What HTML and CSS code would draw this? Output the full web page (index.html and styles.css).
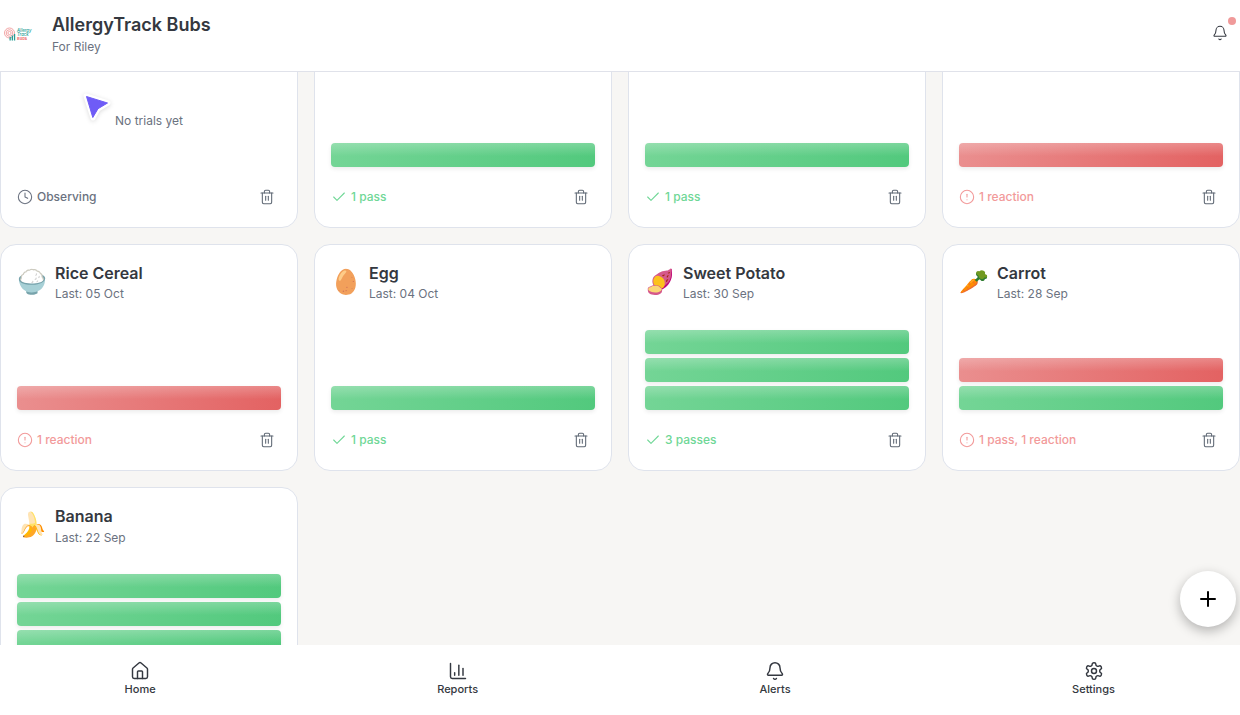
FILE: index.html
```html
<!DOCTYPE html>
<html lang="en">
<head>
<meta charset="utf-8">
<title>AllergyTrack Bubs</title>
<link rel="stylesheet" href="styles.css">
</head>
<body>
<svg class="sprite" aria-hidden="true">
  <symbol id="i-clock" viewBox="0 0 24 24"><circle cx="12" cy="12" r="10"/><polyline points="12 6 12 12 16 14"/></symbol>
  <symbol id="i-trash" viewBox="0 0 24 24"><path d="M3 6h18"/><path d="M19 6v14c0 1-1 2-2 2H7c-1 0-2-1-2-2V6"/><path d="M8 6V4c0-1 1-2 2-2h4c1 0 2 1 2 2v2"/><line x1="10" x2="10" y1="11" y2="17"/><line x1="14" x2="14" y1="11" y2="17"/></symbol>
  <symbol id="i-check" viewBox="0 0 24 24"><path d="M20 6 9 17l-5-5"/></symbol>
  <symbol id="i-alert" viewBox="0 0 24 24"><circle cx="12" cy="12" r="10"/><line x1="12" x2="12" y1="8" y2="12"/><line x1="12" x2="12.01" y1="16" y2="16"/></symbol>
  <symbol id="i-bell" viewBox="0 0 24 24"><path d="M10.268 21a2 2 0 0 0 3.464 0"/><path d="M3.262 15.326A1 1 0 0 0 4 17h16a1 1 0 0 0 .74-1.673C19.41 13.956 18 12.499 18 8A6 6 0 0 0 6 8c0 4.499-1.411 5.956-2.738 7.326"/></symbol>
</svg>
<div class="app">
  <header class="topbar">
    <div class="brand">
      <svg class="logo" viewBox="0 0 30 15" aria-hidden="true">
        <g fill="none" stroke="#ef8f8f" stroke-width=".8"><circle cx="5.5" cy="6" r="5"/><circle cx="5.5" cy="6" r="3.3"/><circle cx="5.5" cy="6" r="1.6"/></g>
        <g fill="#2a9d94"><rect x="5.5" y="10" width="1.3" height="3.5"/><rect x="7.7" y="8.5" width="1.3" height="5"/><rect x="9.9" y="7" width="1.3" height="6.5"/></g>
        <text x="13" y="4.5" class="logo-text">Allergy</text>
        <text x="13" y="8.7" class="logo-text">Track</text>
        <text x="13" y="13.4" class="logo-sub">Bubs</text>
      </svg>
      <div class="brand-text">
        <div class="app-name">AllergyTrack Bubs</div>
        <div class="app-sub">For Riley</div>
      </div>
    </div>
    <button class="bell"><svg class="icon i16"><use href="#i-bell"/></svg><span class="dot"></span></button>
  </header>

  <main class="content">
    <div class="grid">
      <article class="card">
        <div class="empty">No trials yet<svg class="pointer" viewBox="0 0 30 30" aria-hidden="true"><path class="pointer-halo" d="M4 3 26 10 16 16 11 25Z"/><path class="pointer-arrow" d="M4.5 3.5 25.5 10 16 15.7 10.8 24.5Z"/></svg></div>
        <div class="foot"><span class="status neutral"><svg class="icon i16"><use href="#i-clock"/></svg>Observing</span><button class="del"><svg class="icon i16"><use href="#i-trash"/></svg></button></div>
      </article>
      <article class="card">
        <div class="bars"><div class="bar pass"></div></div>
        <div class="foot"><span class="status good"><svg class="icon i16"><use href="#i-check"/></svg>1 pass</span><button class="del"><svg class="icon i16"><use href="#i-trash"/></svg></button></div>
      </article>
      <article class="card">
        <div class="bars"><div class="bar pass"></div></div>
        <div class="foot"><span class="status good"><svg class="icon i16"><use href="#i-check"/></svg>1 pass</span><button class="del"><svg class="icon i16"><use href="#i-trash"/></svg></button></div>
      </article>
      <article class="card">
        <div class="bars"><div class="bar fail"></div></div>
        <div class="foot"><span class="status bad"><svg class="icon i16"><use href="#i-alert"/></svg>1 reaction</span><button class="del"><svg class="icon i16"><use href="#i-trash"/></svg></button></div>
      </article>

      <article class="card">
        <div class="head"><span class="emoji">🍚</span><div><div class="name">Rice Cereal</div><div class="last">Last: 05 Oct</div></div></div>
        <div class="bars"><div class="bar fail"></div></div>
        <div class="foot"><span class="status bad"><svg class="icon i16"><use href="#i-alert"/></svg>1 reaction</span><button class="del"><svg class="icon i16"><use href="#i-trash"/></svg></button></div>
      </article>
      <article class="card">
        <div class="head"><span class="emoji">🥚</span><div><div class="name">Egg</div><div class="last">Last: 04 Oct</div></div></div>
        <div class="bars"><div class="bar pass"></div></div>
        <div class="foot"><span class="status good"><svg class="icon i16"><use href="#i-check"/></svg>1 pass</span><button class="del"><svg class="icon i16"><use href="#i-trash"/></svg></button></div>
      </article>
      <article class="card">
        <div class="head"><span class="emoji">🍠</span><div><div class="name">Sweet Potato</div><div class="last">Last: 30 Sep</div></div></div>
        <div class="bars"><div class="bar pass"></div><div class="bar pass"></div><div class="bar pass"></div></div>
        <div class="foot"><span class="status good"><svg class="icon i16"><use href="#i-check"/></svg>3 passes</span><button class="del"><svg class="icon i16"><use href="#i-trash"/></svg></button></div>
      </article>
      <article class="card">
        <div class="head"><span class="emoji">🥕</span><div><div class="name">Carrot</div><div class="last">Last: 28 Sep</div></div></div>
        <div class="bars"><div class="bar fail"></div><div class="bar pass"></div></div>
        <div class="foot"><span class="status bad"><svg class="icon i16"><use href="#i-alert"/></svg>1 pass, 1 reaction</span><button class="del"><svg class="icon i16"><use href="#i-trash"/></svg></button></div>
      </article>

      <article class="card">
        <div class="head"><span class="emoji">🍌</span><div><div class="name">Banana</div><div class="last">Last: 22 Sep</div></div></div>
        <div class="bars"><div class="bar pass"></div><div class="bar pass"></div><div class="bar pass"></div></div>
        <div class="foot"></div>
      </article>
    </div>
    <button class="fab"><svg class="icon i24" viewBox="0 0 24 24"><path d="M5 12h14"/><path d="M12 5v14"/></svg></button>
  </main>

  <nav class="tabs">
    <a class="tab"><svg class="icon i20" viewBox="0 0 24 24"><path d="M15 21v-8a1 1 0 0 0-1-1h-4a1 1 0 0 0-1 1v8"/><path d="M3 10a2 2 0 0 1 .709-1.528l7-5.999a2 2 0 0 1 2.582 0l7 5.999A2 2 0 0 1 21 10v9a2 2 0 0 1-2 2H5a2 2 0 0 1-2-2z"/></svg>Home</a>
    <a class="tab"><svg class="icon i20" viewBox="0 0 24 24"><path d="M3 3v16a2 2 0 0 0 2 2h16"/><path d="M18 17V9"/><path d="M13 17V5"/><path d="M8 17v-3"/></svg>Reports</a>
    <a class="tab"><svg class="icon i20"><use href="#i-bell"/></svg>Alerts</a>
    <a class="tab"><svg class="icon i20" viewBox="0 0 24 24"><path d="M12.22 2h-.44a2 2 0 0 0-2 2v.18a2 2 0 0 1-1 1.73l-.43.25a2 2 0 0 1-2 0l-.15-.08a2 2 0 0 0-2.73.73l-.22.38a2 2 0 0 0 .73 2.73l.15.1a2 2 0 0 1 1 1.72v.51a2 2 0 0 1-1 1.74l-.15.09a2 2 0 0 0-.73 2.73l.22.38a2 2 0 0 0 2.73.73l.15-.08a2 2 0 0 1 2 0l.43.25a2 2 0 0 1 1 1.73V20a2 2 0 0 0 2 2h.44a2 2 0 0 0 2-2v-.18a2 2 0 0 1 1-1.73l.43-.25a2 2 0 0 1 2 0l.15.08a2 2 0 0 0 2.73-.73l.22-.39a2 2 0 0 0-.73-2.73l-.15-.08a2 2 0 0 1-1-1.74v-.5a2 2 0 0 1 1-1.74l.15-.09a2 2 0 0 0 .73-2.73l-.22-.38a2 2 0 0 0-2.73-.73l-.15.08a2 2 0 0 1-2 0l-.43-.25a2 2 0 0 1-1-1.73V4a2 2 0 0 0-2-2z"/><circle cx="12" cy="12" r="3"/></svg>Settings</a>
  </nav>
</div>
</body>
</html>
```
FILE: styles.css
```css
* { box-sizing: border-box; }
html, body { margin: 0; height: 100%; overflow: hidden; }
body { font-family: Inter, "Noto Sans", sans-serif; color: #343840; background: #f7f6f4; }
.sprite { display: none; }
button { border: 0; background: none; padding: 0; font: inherit; color: inherit; }

.icon { display: block; flex: none; fill: none; stroke: currentColor; stroke-width: 2; stroke-linecap: round; stroke-linejoin: round; }
.i16 { width: 16px; height: 16px; stroke-width: 1.6; }
.i20 { width: 20px; height: 20px; stroke-width: 1.75; }
.i24 { width: 24px; height: 24px; }

.app { display: flex; flex-direction: column; height: 100vh; }

.topbar { flex: none; height: 72px; display: flex; align-items: center; justify-content: space-between; padding: 0 12px 0 4px; background: #fff; border-bottom: 1px solid #e0e2ea; position: relative; z-index: 2; }
.brand { display: flex; align-items: center; gap: 18px; }
.logo { width: 30px; height: 15px; margin-top: -3px; display: block; }
.logo-text { font: italic 500 4.3px Inter, sans-serif; fill: #2a9d94; }
.logo-sub { font: 700 4px Inter, sans-serif; fill: #ef6f6f; }
.app-name { font-size: 18px; line-height: 28px; font-weight: 600; color: #343840; margin-top: -3px; }
.app-sub { font-size: 12px; line-height: 16px; color: #6b7280; margin-bottom: 2px; }
.bell { position: relative; width: 16px; height: 16px; display: block; margin-top: -6px; }
.dot { position: absolute; width: 8px; height: 8px; border-radius: 50%; background: #f09a9a; top: -8px; right: -8px; }

.content { flex: 1; min-height: 0; overflow: hidden; position: relative; }
.grid { display: grid; grid-template-columns: repeat(4, 1fr); grid-auto-rows: 227.4px; gap: 16px; margin-top: -71.5px; }

.card { display: flex; flex-direction: column; background: #fff; border: 1px solid #dfe3ec; border-radius: 16px; padding: 16px; min-width: 0; }
.head { display: flex; align-items: center; gap: 7px; }
.emoji { width: 31px; font: 24px/40px "Noto Color Emoji", sans-serif; text-align: center; flex: none; }
.name { font-size: 16px; line-height: 24px; font-weight: 600; color: #343840; }
.last { font-size: 12px; line-height: 16px; color: #6b7280; margin-top: 1.3px; }

.bars { margin-top: auto; display: flex; flex-direction: column; gap: 4px; }
.bar { height: 24px; border-radius: 4px; box-shadow: 0 2px 4px rgba(0,0,0,.08); }
.pass { background: linear-gradient(180deg, rgba(255,255,255,.24), rgba(255,255,255,0) 55%), linear-gradient(100deg, #74d596, #52c97d); }
.fail { background: linear-gradient(180deg, rgba(255,255,255,.24), rgba(255,255,255,0) 55%), linear-gradient(100deg, #ea8f8f, #e36262); }

.empty { flex: 1; position: relative; display: flex; align-items: center; justify-content: center; font-size: 12px; color: #6b7280; padding-top: 73px; padding-bottom: 16px; }
.pointer { position: absolute; width: 30px; height: 30px; left: 65px; top: 75px; overflow: visible; filter: drop-shadow(0 1px 2px rgba(0,0,0,.14)); }
.pointer-halo { fill: #fff; stroke: #fff; stroke-width: 5; stroke-linejoin: round; }
.pointer-arrow { fill: #6f5cf6; stroke: #6f5cf6; stroke-width: 1; stroke-linejoin: round; }

.foot { display: flex; align-items: center; justify-content: space-between; margin-top: 16px; min-height: 28px; }
.status { display: flex; align-items: center; gap: 4px; font-size: 12px; font-weight: 500; margin-bottom: .7px; }
.neutral { color: #6b7280; }
.good { color: #6fd796; }
.bad { color: #f29a9a; }
.del { width: 28px; height: 28px; display: flex; align-items: center; justify-content: center; color: #5f6874; }

.fab { position: absolute; right: 4px; bottom: 18px; width: 56px; height: 56px; border-radius: 50%; background: #fff; color: #000; display: flex; align-items: center; justify-content: center; box-shadow: 0 4px 12px rgba(0,0,0,.28); }

.tabs { flex: none; height: 70px; background: #fff; display: flex; justify-content: space-between; align-items: flex-start; padding: 16px 125px 0 124.6px; position: relative; z-index: 2; }
.tab { display: flex; flex-direction: column; align-items: center; font-size: 11px; line-height: 16px; font-weight: 500; color: #343840; }
```
